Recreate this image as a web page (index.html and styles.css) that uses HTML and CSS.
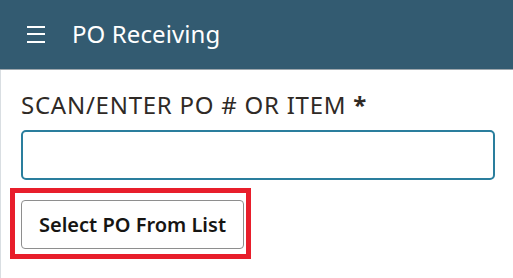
FILE: index.html
```html
<!DOCTYPE html>
<html lang="en">
<head>
<meta charset="utf-8">
<title>PO Receiving</title>
<link rel="stylesheet" href="styles.css">
</head>
<body>
<header class="appbar">
  <span class="menu" aria-label="Menu">
    <span class="menu-line"></span>
    <span class="menu-line"></span>
    <span class="menu-line"></span>
  </span>
  <h1 class="title">PO Receiving</h1>
</header>
<main class="content">
  <label class="field-label" for="po">SCAN/ENTER PO # OR ITEM <span class="req">*</span></label>
  <input class="field-input" id="po" type="text">
  <div class="highlight">
    <button class="btn" type="button">Select PO From List</button>
  </div>
</main>
</body>
</html>
```
FILE: styles.css
```css
html, body {
  margin: 0;
  padding: 0;
  background: #ffffff;
}
body {
  font-family: "Noto Sans", "Open Sans", sans-serif;
  color: #2b2b2b;
  height: 278px;
  overflow: hidden;
}
.appbar {
  background: #335b71;
  border-bottom: 1px solid #9ea7ad;
  display: flex;
  align-items: center;
  padding-left: 27px;
  box-sizing: border-box;
  height: 70px;
}
.menu {
  display: flex;
  flex-direction: column;
  justify-content: space-between;
  width: 18px;
  height: 17px;
  margin-top: -1px;
}
.menu-line {
  display: block;
  height: 2px;
  background: #ffffff;
}
.title {
  margin: -2px 0 0 27px;
  font-size: 24px;
  font-weight: 400;
  color: #ffffff;
  line-height: 30px;
  letter-spacing: 0.1px;
}
.content {
  border-left: 1px solid #d9dee2;
  padding: 21px 18px 0 20px;
  height: 208px;
  box-sizing: border-box;
}
.field-label {
  display: block;
  font-size: 24px;
  line-height: 28px;
  letter-spacing: 0.75px;
  color: #2f2a26;
}
.req {
  font-weight: 700;
}
.field-input {
  display: block;
  width: 100%;
  box-sizing: border-box;
  height: 50px;
  margin: 11px 0 0 0;
  border: 2px solid #2a7e9d;
  border-radius: 5px;
  background: #ffffff;
  font: inherit;
  outline: none;
}
.highlight {
  display: inline-block;
  margin: 8px 0 0 -11px;
  border: 5px solid #e81e2b;
  padding: 7px 2px 5px 6px;
}
.btn {
  display: block;
  width: 223px;
  height: 49px;
  border: 1px solid #8e8e8e;
  border-radius: 4px;
  background: #ffffff;
  font-family: "Noto Sans", "Open Sans", sans-serif;
  font-size: 20px;
  font-weight: 600;
  color: #161513;
  padding: 0;
  cursor: pointer;
}
```
